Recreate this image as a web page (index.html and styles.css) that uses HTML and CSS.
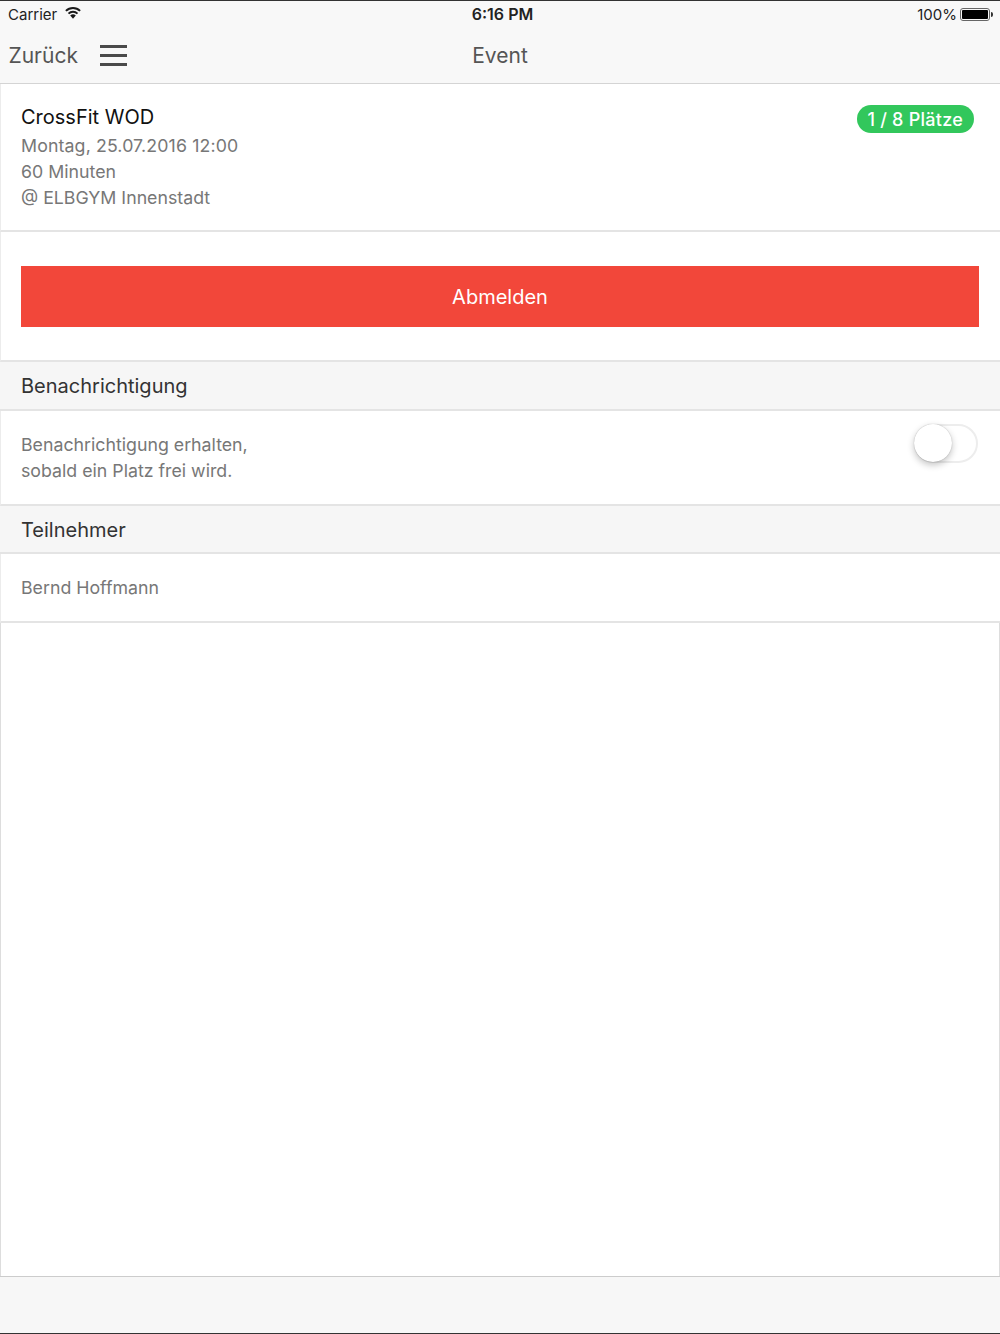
FILE: index.html
```html
<!DOCTYPE html>
<html lang="en">
<head>
    <meta charset="UTF-8">
    <meta name="viewport" content="width=device-width, initial-scale=1.0">
    <title>Event</title>
    <link rel="stylesheet" href="styles.css">
</head>
<body>
    <div class="app">
        <!-- Status bar -->
        <div class="status-bar">
            <div class="status-left">
                <span>Carrier</span>
                <svg class="wifi" width="16" height="12" viewBox="0 0 16 12">
                    <path d="M8 11.8 5.2 8.6a4 4 0 0 1 5.6 0Z" fill="#1a1a1a"/>
                    <path d="M3.5 6.6a6.4 6.4 0 0 1 9 0" fill="none" stroke="#1a1a1a" stroke-width="2"/>
                    <path d="M.9 3.9a10.2 10.2 0 0 1 14.2 0" fill="none" stroke="#1a1a1a" stroke-width="2"/>
                </svg>
            </div>
            <div class="status-time">6:16 PM</div>
            <div class="status-right">
                <span>100%</span>
                <div class="battery"><div class="battery-fill"></div></div>
                <div class="battery-tip"></div>
            </div>
        </div>

        <!-- Navigation -->
        <div class="nav-bar">
            <div class="nav-left">
                <span class="nav-back">Zurück</span>
                <div class="burger"><span></span><span></span><span></span></div>
            </div>
            <div class="nav-title">Event</div>
            <div></div>
        </div>

        <!-- Event info -->
        <div class="event">
            <div>
                <div class="event-name">CrossFit WOD</div>
                <div class="event-line event-date">Montag, 25.07.2016 12:00</div>
                <div class="event-line">60 Minuten</div>
                <div class="event-line">@ ELBGYM Innenstadt</div>
            </div>
            <div class="badge">1 / 8 Plätze</div>
        </div>

        <div class="action">
            <button class="btn-red">Abmelden</button>
        </div>

        <div class="section-head">Benachrichtigung</div>
        <div class="notify">
            <div class="notify-text">Benachrichtigung erhalten,<br>sobald ein Platz frei wird.</div>
            <div class="toggle"><div class="knob"></div></div>
        </div>

        <div class="section-head">Teilnehmer</div>
        <div class="person">Bernd Hoffmann</div>

        <div class="empty"></div>
        <div class="footer"></div>
    </div>
</body>
</html>
```

FILE: styles.css
```css
* {
    box-sizing: border-box;
}
html, body {
    margin: 0;
    padding: 0;
}
body {
    font-family: Inter, "Liberation Sans", sans-serif;
    background-color: #fff;
    color: #666;
}
.app {
    height: 1334px;
    display: flex;
    flex-direction: column;
    border-top: 1px solid #333;
    border-bottom: 1px solid #333;
    overflow: hidden;
}
.status-bar {
    height: 27px;
    background-color: #f8f8f8;
    display: grid;
    grid-template-columns: 1fr auto 1fr;
    align-items: center;
    padding: 0 7px 0 8px;
    font-size: 15px;
    color: #222;
}
.status-left {
    display: flex;
    align-items: center;
    gap: 8px;
}
.wifi {
    margin-top: -3px;
}
.status-time {
    font-size: 16px;
    font-weight: 600;
    padding: 0 0 2px 4px;
}
.status-right {
    display: flex;
    align-items: center;
    justify-content: flex-end;
}
.battery {
    width: 30px;
    height: 13px;
    margin-left: 3px;
    border: 1px solid #666;
    border-radius: 3px;
    padding: 1px;
}
.battery-fill {
    height: 100%;
    background-color: #000;
    border-radius: 1px;
}
.battery-tip {
    width: 2px;
    height: 5px;
    margin-left: 1px;
    background-color: #333;
    border-radius: 0 2px 2px 0;
}
.nav-bar {
    height: 56px;
    background-color: #f8f8f8;
    border-bottom: 1px solid #d4d4d4;
    display: grid;
    grid-template-columns: 1fr auto 1fr;
    align-items: center;
    padding: 0 8.5px;
    font-size: 21px;
    color: #555;
}
.nav-left {
    display: flex;
    align-items: center;
    gap: 22.5px;
}
.burger {
    width: 27px;
    display: flex;
    flex-direction: column;
    gap: 6px;
}
.burger span {
    height: 3px;
    background-color: #4a4a4a;
}
.event {
    height: 148px;
    padding: 20px 26px 0 20px;
    display: flex;
    justify-content: space-between;
    align-items: flex-start;
    border-left: 1px solid #ececec;
    border-bottom: 2px solid #e4e4e4;
}
.event-name {
    font-size: 20px;
    line-height: 26px;
    color: #111;
    margin-bottom: 3px;
}
.event-line {
    font-size: 17.75px;
    line-height: 26px;
    color: #777;
}
.event-date {
    letter-spacing: 0.12px;
}
.badge {
    margin-top: 1px;
    height: 28px;
    padding: 1px 11px 0 10.5px;
    border-radius: 14px;
    background-color: #32c75c;
    color: #fff;
    font-size: 18px;
    font-weight: 500;
    line-height: 28px;
    letter-spacing: 0.25px;
}
.action {
    height: 130px;
    padding: 34px 21px 0 20px;
    border-left: 1px solid #ececec;
    border-bottom: 2px solid #e4e4e4;
}
.btn-red {
    display: block;
    width: 100%;
    height: 61px;
    padding: 1px 0 0;
    border: none;
    background-color: #f2473a;
    color: #fff;
    font-family: inherit;
    font-size: 20px;
}
.section-head {
    height: 48.5px;
    padding: 1.5px 0 0 21px;
    background-color: #f6f6f6;
    border-bottom: 2px solid #e4e4e4;
    display: flex;
    align-items: center;
    font-size: 20px;
    color: #333;
}
.notify {
    height: 95px;
    padding: 21px 22px 0 20px;
    display: flex;
    justify-content: space-between;
    align-items: flex-start;
    border-left: 1px solid #ececec;
    border-bottom: 2px solid #e4e4e4;
}
.notify-text, .person {
    font-size: 17.75px;
    line-height: 26px;
    color: #777;
}
.toggle {
    position: relative;
    width: 64px;
    height: 39px;
    margin-top: -8px;
    border: 2px solid #ededed;
    border-radius: 20px;
    background-color: #fff;
}
.knob {
    position: absolute;
    left: -2px;
    top: -2px;
    width: 38px;
    height: 38px;
    border-radius: 50%;
    background-color: #fff;
    box-shadow: 0 0 1px rgba(0, 0, 0, 0.3), 0 3px 7px rgba(0, 0, 0, 0.24);
}
.person {
    height: 68.5px;
    padding: 21px 0 0 20px;
    border-left: 1px solid #ececec;
    border-bottom: 2px solid #e4e4e4;
}
.empty {
    flex: 1;
    border-left: 1px solid #ddd;
    border-right: 1px solid #ddd;
}
.footer {
    height: 57px;
    background-color: #f7f7f7;
    border-top: 1px solid #ccc;
}
```
